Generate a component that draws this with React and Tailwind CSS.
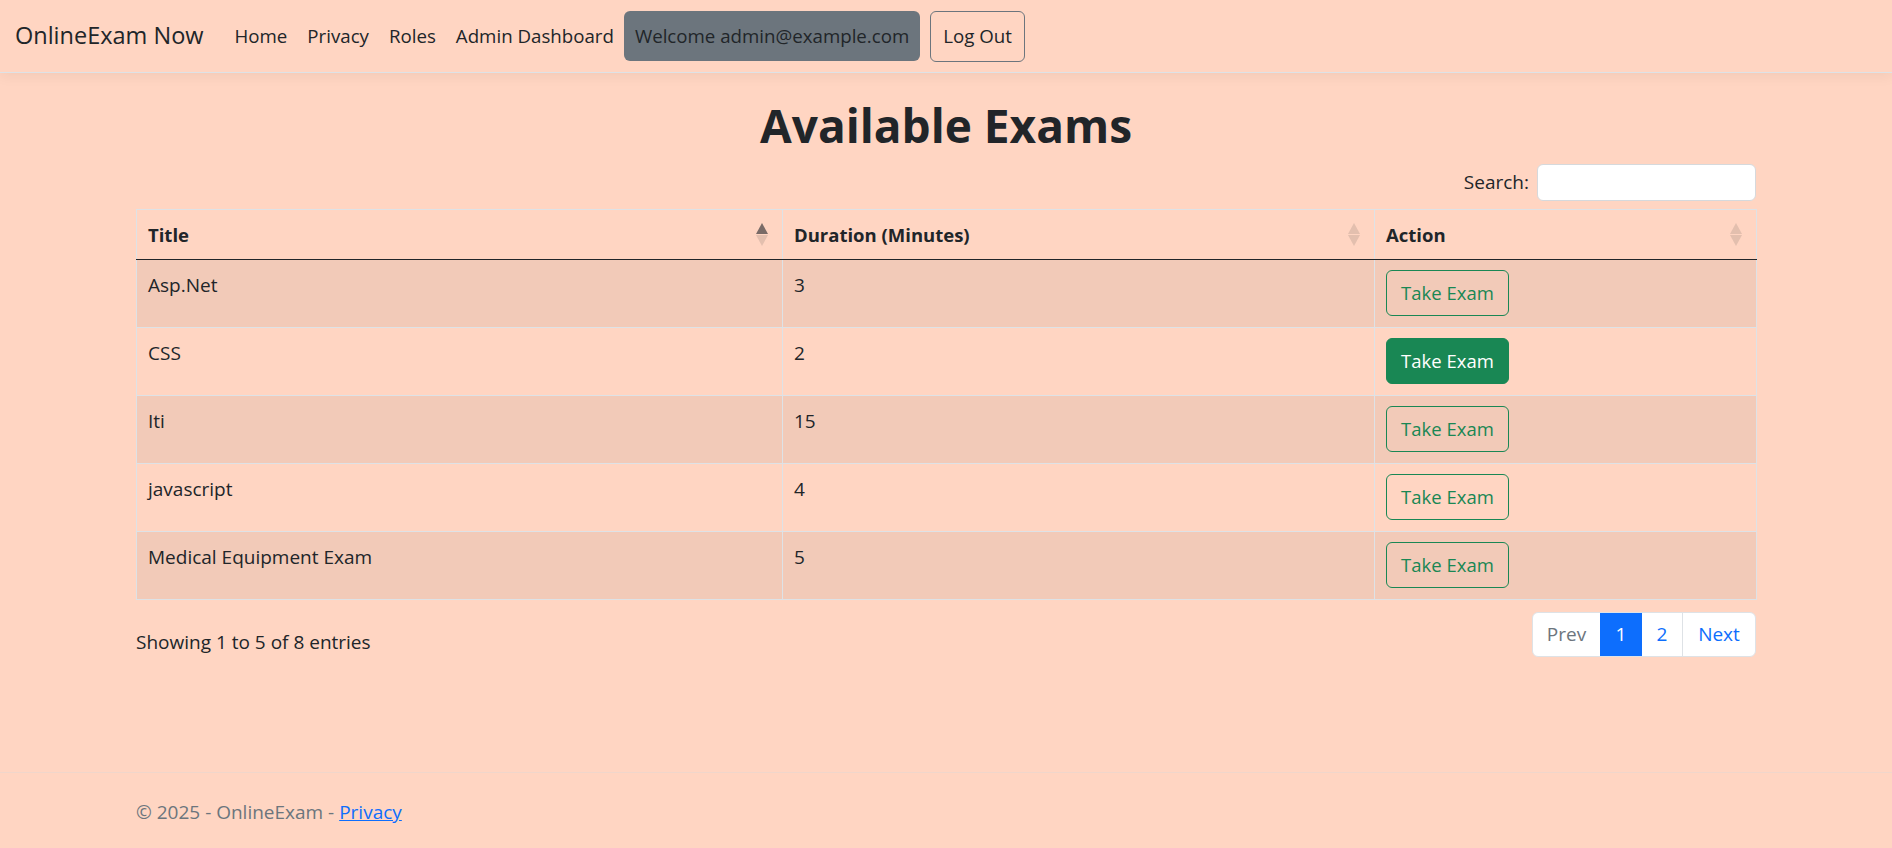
export default function App() {
  const exams = [
    { title: "Asp.Net", duration: 3 },
    { title: "CSS", duration: 2, active: true },
    { title: "Iti", duration: 15 },
    { title: "javascript", duration: 4 },
    { title: "Medical Equipment Exam", duration: 5 },
  ];

  return (
    <div className="min-h-[848px] flex flex-col bg-[#ffd5c2] text-[#212529] font-['Open_Sans',sans-serif]">
      {/* Navbar */}
      <nav className="h-[73px] border-b border-[#dee2e6] shadow-[0_4px_12px_rgba(0,0,0,0.05)] flex items-center px-[15px]">
        <span className="text-[23.5px] mr-[21px]">OnlineExam Now</span>
        <div className="flex items-center text-[18.7px]">
          <span className="px-[10px]">Home</span>
          <span className="px-[10px]">Privacy</span>
          <span className="px-[10px]">Roles</span>
          <span className="px-[10px]">Admin Dashboard</span>
        </div>
        <div className="h-[50px] px-[11px] rounded-[6px] bg-[#6c757d] flex items-center text-[18.7px]">
          Welcome admin@example.com
        </div>
        <button className="ml-[10px] h-[51px] px-[12px] border border-[#6c757d] rounded-[6px] text-[18.7px]">
          Log Out
        </button>
      </nav>

      {/* Main */}
      <main className="w-[1620px] mx-auto">
        <h1 className="mt-[23px] text-[46px] font-bold text-center leading-[58px]">Available Exams</h1>

        <div className="mt-[10px] flex justify-end items-center gap-[8px]">
          <label className="text-[19px]">Search:</label>
          <input className="w-[219px] h-[37px] bg-white border border-[#d6d9dc] rounded-[6px]" />
        </div>

        <table className="mt-[8px] w-full table-fixed border-collapse border border-[#dee2e6]">
          <colgroup>
            <col className="w-[646px]" />
            <col className="w-[592px]" />
            <col className="w-[382px]" />
          </colgroup>
          <thead>
            <tr>
              <HeaderCell label="Title" sorted />
              <HeaderCell label="Duration (Minutes)" />
              <HeaderCell label="Action" />
            </tr>
          </thead>
          <tbody>
            {exams.map((e, i) => (
              <tr key={e.title} className={i % 2 === 0 ? "bg-[#f2cab8]" : ""}>
                <td className="h-[68px] border border-[#dee2e6] align-top px-[11px] pt-[11px] text-[19px] leading-[29px]">{e.title}</td>
                <td className="h-[68px] border border-[#dee2e6] align-top px-[11px] pt-[11px] text-[19px] leading-[29px]">{e.duration}</td>
                <td className="h-[68px] border border-[#dee2e6] align-top px-[11px] pt-[10px]">
                  <button
                    className={
                      e.active
                        ? "h-[46px] w-[123px] border border-[#198754] bg-[#198754] text-white rounded-[6px] text-[18.5px]"
                        : "h-[46px] w-[123px] border border-[#198754] text-[#198754] rounded-[6px] text-[18.5px]"
                    }
                  >
                    Take Exam
                  </button>
                </td>
              </tr>
            ))}
          </tbody>
        </table>

        <div className="mt-[12px] flex justify-between items-start">
          <div className="pt-[16px] leading-[29px] text-[19px]">Showing 1 to 5 of 8 entries</div>
          <div className="flex h-[45px] bg-white border border-[#dee2e6] rounded-[6px] overflow-hidden text-[19px]">
            <span className="w-[67px] flex items-center justify-center text-[#6c757d]">Prev</span>
            <span className="w-[42px] flex items-center justify-center bg-[#0d6efd] text-white">1</span>
            <span className="w-[41px] flex items-center justify-center text-[#0d6efd] border-r border-[#dee2e6]">2</span>
            <span className="w-[72px] flex items-center justify-center text-[#0d6efd]">Next</span>
          </div>
        </div>
      </main>

      {/* Footer */}
      <footer className="mt-auto border-t border-[#f0d6cb] h-[76px]">
        <div className="w-[1620px] mx-auto pt-[25px] leading-[29px] text-[19px] text-[#6c757d]">
          © 2025 - OnlineExam - <span className="text-[#0d6efd] underline">Privacy</span>
        </div>
      </footer>
    </div>
  );
}

function HeaderCell({ label, sorted }) {
  return (
    <th className="h-[50px] border-x border-t border-[#dee2e6] border-b border-b-[#212529] pl-[11px] pr-[14px] text-left font-bold text-[18.5px]">
      <div className="flex items-center justify-between">
        <span>{label}</span>
        <svg width="12" height="23" viewBox="0 0 12 23">
          <polygon points="6,0 12,11 0,11" fill="#212529" fillOpacity={sorted ? 0.6 : 0.125} />
          <polygon points="0,12 12,12 6,23" fill="#212529" fillOpacity="0.125" />
        </svg>
      </div>
    </th>
  );
}
